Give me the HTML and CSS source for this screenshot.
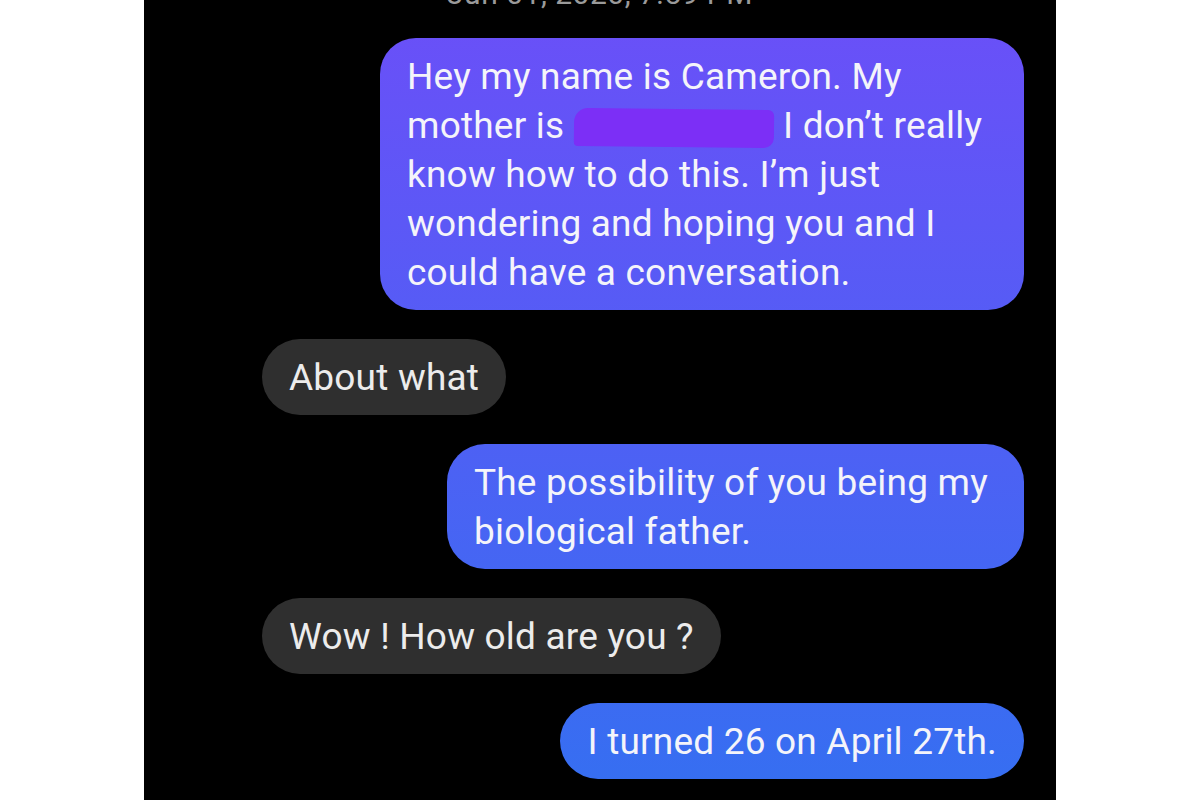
FILE: index.html
```html
<!DOCTYPE html>
<html lang="en">
<head>
    <meta charset="UTF-8">
    <meta name="viewport" content="width=device-width, initial-scale=1.0">
    <title>Messages</title>
    <link rel="stylesheet" href="styles.css">
</head>
<body>

<main class="chat">
    <p class="stamp">Jun 01, 2020, 7:59 PM</p>

    <div class="bubble sent wide">
        Hey my name is Cameron. My mother is <span class="redact"></span> I don’t really know how to do this. I’m just wondering and hoping you and I could have a conversation.
    </div>

    <div class="bubble received">About what</div>

    <div class="bubble sent mid">The possibility of you being my biological father.</div>

    <div class="bubble received">Wow ! How old are you ?</div>

    <div class="bubble sent">I turned 26 on April 27th.</div>
</main>

</body>
</html>
```

FILE: styles.css
```css
:root {
    --sent-top: #6b4ff8;
    --sent-bottom: #356ff1;
    --received: #2f2f2f;
    --panel: #000;
}

* {
    margin: 0;
    padding: 0;
    box-sizing: border-box;
}

body {
    background-color: #fff;
    font-family: Roboto, 'Noto Sans', sans-serif;
    overflow: hidden;
}

.chat {
    width: 912px;
    min-height: 100vh;
    margin: 0 auto;
    padding: 0 32px;
    background-color: var(--panel);
    display: flex;
    flex-direction: column;
    gap: 29px;
}

/* only the lower half of the date shows at the top edge */
.stamp {
    margin-top: -23px;
    margin-bottom: -2px;
    text-align: center;
    font-size: 30px;
    line-height: 34px;
    letter-spacing: 0.5px;
    color: #9a9a9a;
}

.bubble {
    max-width: 644px;
    padding: 13.5px 27px;
    border-radius: 38px;
    font-size: 37px;
    line-height: 49px;
    letter-spacing: 0.2px;
    color: #f4f4fa;
}

.sent {
    align-self: flex-end;
    background: linear-gradient(to bottom, var(--sent-top), var(--sent-bottom)) fixed;
}

.sent.wide {
    width: 644px;
    border-radius: 36px;
}

.sent.mid {
    width: 577px;
}

.received {
    align-self: flex-start;
    margin-left: 86px;
    background-color: var(--received);
    color: #ececec;
}

.redact {
    display: inline-block;
    width: 200px;
    height: 38px;
    vertical-align: -9px;
    background-color: #7c2ff6;
    border-radius: 14px 6px 10px 4px;
    transform: rotate(0.6deg);
}
```
